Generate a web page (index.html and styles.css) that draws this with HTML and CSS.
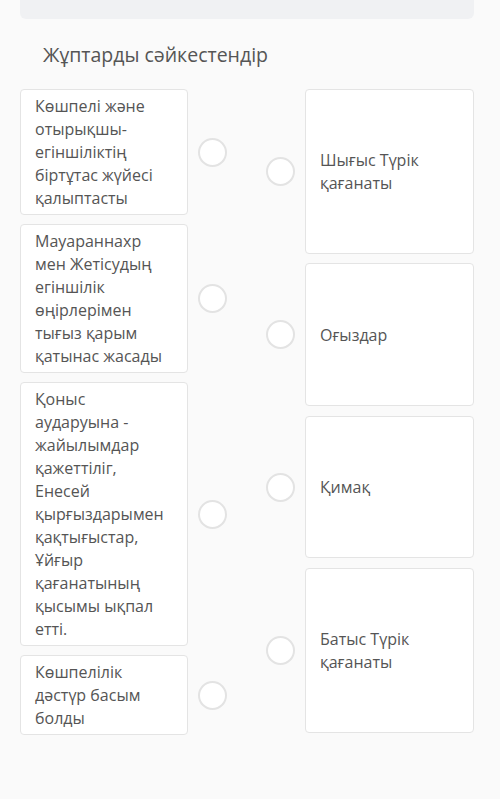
FILE: index.html
```html
<!DOCTYPE html>
<html lang="kk">
<head>
<meta charset="utf-8">
<title>Жұптарды сәйкестендір</title>
<link rel="stylesheet" href="styles.css">
</head>
<body>
<div class="page">
  <div class="topbar"></div>
  <h1 class="title">Жұптарды сәйкестендір</h1>
  <div class="match">
    <div class="col col-left">
      <div class="row"><div class="card">Көшпелі және отырықшы-егіншіліктің біртұтас жүйесі қалыптасты</div><span class="dot"></span></div>
      <div class="row"><div class="card">Мауараннахр мен Жетісудың егіншілік өңірлерімен тығыз қарым қатынас жасады</div><span class="dot"></span></div>
      <div class="row"><div class="card">Қоныс аударуына - жайылымдар қажеттіліг, Енесей қырғыздарымен қақтығыстар, Ұйғыр қағанатының қысымы ықпал етті.</div><span class="dot"></span></div>
      <div class="row"><div class="card">Көшпелілік дәстүр басым болды</div><span class="dot"></span></div>
    </div>
    <div class="col col-right">
      <div class="row"><span class="dot"></span><div class="card card-r h1">Шығыс Түрік қағанаты</div></div>
      <div class="row"><span class="dot"></span><div class="card card-r h2">Оғыздар</div></div>
      <div class="row"><span class="dot"></span><div class="card card-r h3">Қимақ</div></div>
      <div class="row"><span class="dot"></span><div class="card card-r h4">Батыс Түрік қағанаты</div></div>
    </div>
  </div>
</div>
</body>
</html>
```
FILE: styles.css
```css
html, body {
  margin: 0;
  padding: 0;
  background: #fafafa;
}
body {
  font-family: "Open Sans", "Noto Sans", sans-serif;
  color: #555;
}
.page {
  padding: 0 26px 0 20px;
}
.topbar {
  height: 19px;
  background: #f0f1f3;
  border-radius: 0 0 6px 6px;
}
.title {
  margin: 0;
  padding: 20px 0 0 23px;
  font-size: 19.5px;
  font-weight: 400;
  line-height: 32px;
  color: #555;
  height: 70px;
  box-sizing: border-box;
}
.match {
  display: flex;
  justify-content: space-between;
  align-items: flex-start;
}
.col {
  display: flex;
  flex-direction: column;
  gap: 9px;
}
.row {
  display: flex;
  align-items: center;
}
.card {
  background: #fff;
  border: 1px solid #e4e4e4;
  border-radius: 4px;
  font-size: 16px;
  line-height: 23px;
  padding: 5px 14px 4px;
  box-sizing: border-box;
  color: #555;
}
.col-left .card {
  width: 168px;
}
.card-r {
  width: 169px;
  display: flex;
  align-items: center;
}
.h1 { height: 165px; }
.h2 { height: 143px; }
.h3 { height: 142px; }
.h4 { height: 165px; }
.col-right .row:nth-child(3) { margin-top: 1px; }
.col-right .row:nth-child(4) { margin-top: 1px; }
.dot {
  width: 29px;
  height: 29px;
  box-sizing: border-box;
  border: 2.5px solid #e3e3e3;
  border-radius: 50%;
  background: #fff;
  flex: none;
}
.col-left .dot {
  margin-left: 10px;
}
.col-right .dot {
  margin-right: 10px;
}
```
